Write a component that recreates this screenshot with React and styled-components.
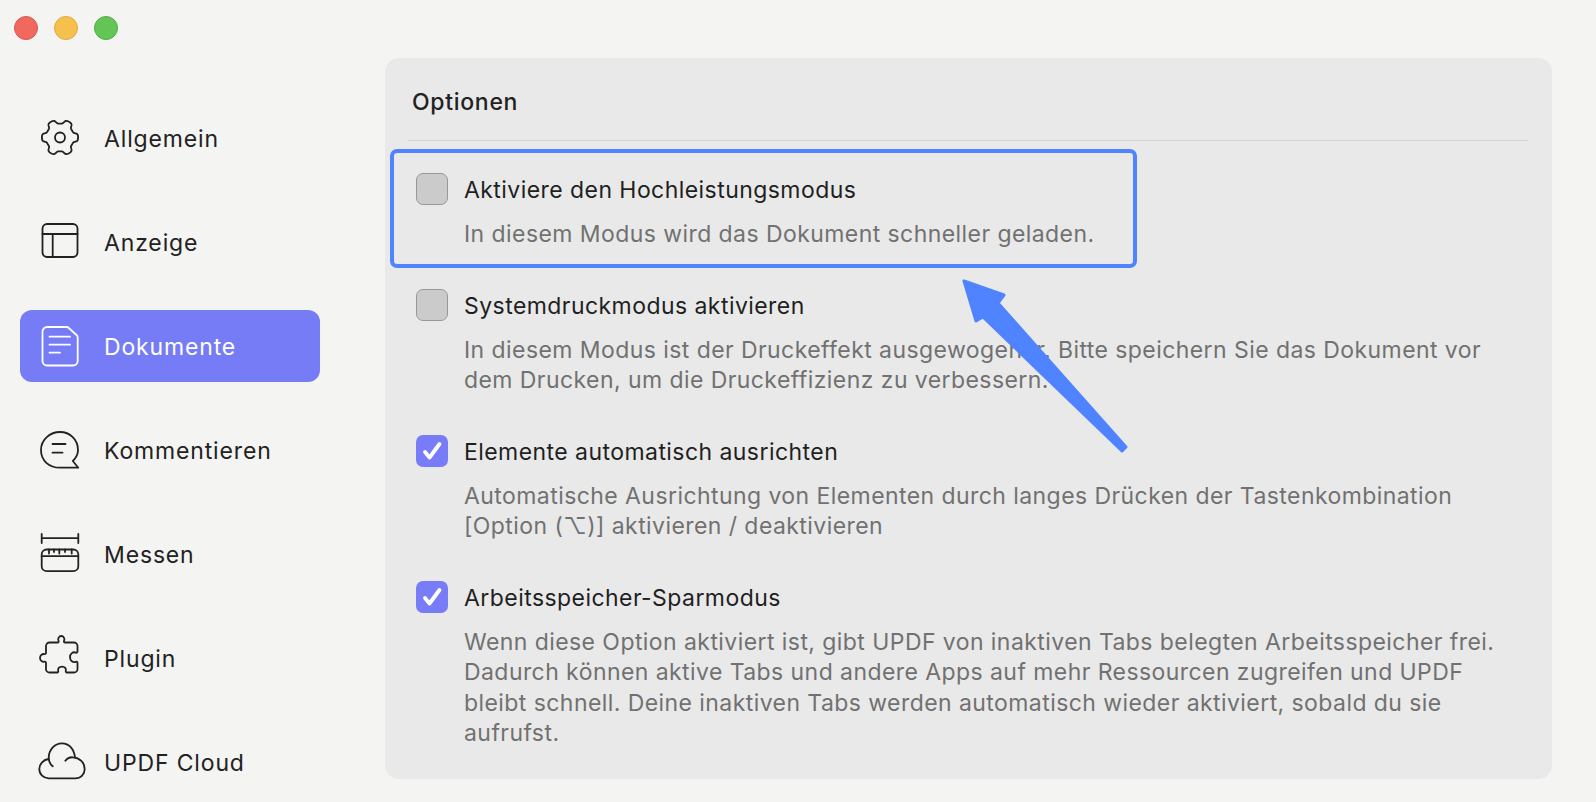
import React from "react";
import styled, { createGlobalStyle } from "styled-components";

const Global = createGlobalStyle`
  html, body { margin: 0; padding: 0; height: 100%; background: #f4f4f3; }
  #root { height: 100%; }
  * { box-sizing: border-box; }
`;

const Windowed = styled.div`
  position: relative;
  width: 1596px;
  height: 802px;
  overflow: hidden;
  display: flex;
  background: #f4f4f3;
  font-family: Inter, "Liberation Sans", sans-serif;
`;
const Sidebar = styled.aside`
  width: 385px;
  flex: none;
  padding: 16px 0 0 14px;
`;
const Lights = styled.div`
  display: flex;
  gap: 16px;
  height: 24px;
`;
const Light = styled.span`
  width: 24px;
  height: 24px;
  border-radius: 50%;
  background: ${(p) => p.$bg};
  border: 1px solid ${(p) => p.$edge};
`;
const Nav = styled.nav`
  display: flex;
  flex-direction: column;
  gap: 32px;
  margin: 62px 0 0 6px;
  width: 300px;
`;
const NavItem = styled.div`
  height: 72px;
  display: flex;
  align-items: center;
  gap: 24px;
  padding-left: 20px;
  border-radius: 12px;
  font-size: 23px;
  letter-spacing: 0.85px;
  color: ${(p) => (p.$active ? "#ffffff" : "#222222")};
  background: ${(p) => (p.$active ? "#767bf6" : "transparent")};
`;
const NavLabel = styled.span`
  padding-top: 2px;
`;
const IconBox = styled.span`
  width: 40px;
  height: 40px;
  flex: none;
  display: block;
  svg { display: block; width: 40px; height: 40px; overflow: visible; fill: none; stroke: currentColor; stroke-width: 1.8; stroke-linecap: round; stroke-linejoin: round; }
`;
const Panel = styled.main`
  width: 1167px;
  height: 721px;
  margin-top: 58px;
  padding: 0 24px 0 23px;
  background: #e9e9e9;
  border-radius: 14px;
`;
const Heading = styled.h2`
  margin: 0;
  height: 83px;
  border-bottom: 1px solid #d4d4d4;
  padding: 29px 0 0 4px;
  font-size: 23px;
  letter-spacing: 0.7px;
  line-height: 30px;
  font-weight: 500;
  color: #222222;
`;
const Options = styled.div`
  display: flex;
  flex-direction: column;
  gap: 39px;
  padding: 32px 0 0 8px;
`;
const Option = styled.div`
  display: grid;
  grid-template-columns: 32px 1fr;
  column-gap: 16px;
  row-gap: 12px;
`;
const Box = styled.span`
  width: 32px;
  height: 32px;
  border-radius: 7px;
  display: flex;
  align-items: center;
  justify-content: center;
  background: ${(p) => (p.$on ? "#787cf8" : "#cbcbcb")};
  border: ${(p) => (p.$on ? "none" : "1.5px solid #989898")};
`;
const Title = styled.div`
  font-size: 23px;
  letter-spacing: 0.44px;
  line-height: 34px;
  color: #1f1f1f;
`;
const Desc = styled.div`
  grid-column: 2;
  font-size: 23px;
  letter-spacing: 0.43px;
  line-height: 30.5px;
  color: #717171;
`;
const Highlight = styled.div`
  position: absolute;
  left: 390px;
  top: 149px;
  width: 747px;
  height: 119px;
  border: 4px solid #4f83ff;
  border-radius: 7px;
`;
const Arrow = styled.svg`
  position: absolute;
  left: 950px;
  top: 270px;
  width: 190px;
  height: 190px;
  overflow: visible;
`;

const gearPath = (() => {
  const pts = [];
  const k = Math.tanh(2.2);
  for (let i = 0; i < 180; i += 1) {
    const t = (i / 180) * 2 * Math.PI;
    const r = 16 + (2.1 * Math.tanh(2.2 * Math.cos(6 * t))) / k;
    pts.push(`${(20 + r * Math.cos(t)).toFixed(2)} ${(19.5 + r * Math.sin(t)).toFixed(2)}`);
  }
  return `M${pts.join("L")}Z`;
})();

const Gear = () => (
  <svg viewBox="0 0 40 40">
    <circle cx="20" cy="19.5" r="5" />
    <path d={gearPath} />
  </svg>
);
const Layout = () => (
  <svg viewBox="0 0 40 40">
    <rect x="2.5" y="2" width="35" height="33" rx="4.5" />
    <path d="M2.5 12h35M12.7 12v23" />
  </svg>
);
const Doc = () => (
  <svg viewBox="0 0 40 40">
    <path d="M7 1h19.5c1 0 1.600.3 2.300 1l7.700 7c.8.7 1.200 1.500 1.200 2.500V35a4.500 4.500 0 0 1-4.500 4.500H7A4.500 4.500 0 0 1 2.500 35V5.500A4.500 4.500 0 0 1 7 1z" />
    <path d="M9.500 10.700H30M9.500 18.700H30M9.500 26.700H20" />
  </svg>
);
const Comment = () => (
  <svg viewBox="0 0 40 40">
    <path d="M20 2C10 2 1 9.500 1 20s8 17.700 19 17.700h18.300l-5.500-6.700C36 28 38 24 38 20 38 9.500 30 2 20 2z" />
    <path d="M12.500 14h13M12.500 22.700h10" />
  </svg>
);
const Ruler = () => (
  <svg viewBox="0 0 40 40">
    <path d="M1.700 0v9M38.300 0v9M1.700 4.200h36.600" />
    <rect x="1.700" y="15.500" width="36.600" height="21.700" rx="5" />
    <path d="M1.700 22.200h36.600M9 15.500v4M14 15.500v2.500M19.300 15.500v4M25 15.500v2.500M31.700 15.500v4" />
  </svg>
);
const Puzzle = () => (
  <svg viewBox="0 0 40 40">
    <path d="M9.500 4.500H17.500c1 0 1.500-.8 1-1.800-1-2 .5-4.700 2.800-4.700s3.800 2.700 2.800 4.700c-.5 1 0 1.800 1 1.800H34a3.500 3.500 0 0 1 3.500 3.500v5.500c0 1-.8 1.500-1.800 1.100C33 13.500 30 15.500 30 19.200s3 5.700 5.700 4.600c1-.4 1.800.1 1.800 1.100V31a3.500 3.500 0 0 1-3.500 3.500H27c-1 0-1.500-.8-1.200-1.800.6-2-.8-4-3.800-4s-4.400 2-3.800 4c.3 1-.2 1.800-1.200 1.800H9.500A3.500 3.500 0 0 1 6 31v-6c0-1-.6-1.500-1.500-1.300-2 .5-4.500-1-4.500-3.800s2.500-4.300 4.500-3.800c.9.2 1.500-.3 1.500-1.300V8a3.500 3.500 0 0 1 3.500-3.500z" />
  </svg>
);
const Cloud = () => (
  <svg viewBox="0 0 40 40">
    <path d="M12.700 24.300C10 22 8.700 19.500 8.700 16 8.700 8 14.500 1.300 22 1.300c7 0 12 5.700 13 14.200" />
    <path d="M25.300 18.700C27 16.500 30 15 33 15.300c6.500.2 11.700 5.200 11.700 11.700 0 5-3.700 9.300-9.400 9.300H8.700C3.500 36.300-.7 32.500-.7 27c0-5 4.200-9.500 9.400-10" />
  </svg>
);
const Check = () => (
  <svg width="32" height="32" viewBox="0 0 32 32" fill="none" stroke="#fff" strokeWidth="3.8" strokeLinecap="round" strokeLinejoin="round">
    <path d="M9 17l4.500 5.500L23.500 9" />
  </svg>
);

const navItems = [
  ["Allgemein", Gear],
  ["Anzeige", Layout],
  ["Dokumente", Doc, true],
  ["Kommentieren", Comment],
  ["Messen", Ruler],
  ["Plugin", Puzzle],
  ["UPDF Cloud", Cloud],
];
const options = [
  ["Aktiviere den Hochleistungsmodus", ["In diesem Modus wird das Dokument schneller geladen."], false],
  ["Systemdruckmodus aktivieren", ["In diesem Modus ist der Druckeffekt ausgewogener. Bitte speichern Sie das Dokument vor", "dem Drucken, um die Druckeffizienz zu verbessern."], false],
  ["Elemente automatisch ausrichten", ["Automatische Ausrichtung von Elementen durch langes Drücken der Tastenkombination", "[Option (⌥)] aktivieren / deaktivieren"], true],
  ["Arbeitsspeicher-Sparmodus", ["Wenn diese Option aktiviert ist, gibt UPDF von inaktiven Tabs belegten Arbeitsspeicher frei.", "Dadurch können aktive Tabs und andere Apps auf mehr Ressourcen zugreifen und UPDF", "bleibt schnell. Deine inaktiven Tabs werden automatisch wieder aktiviert, sobald du sie", "aufrufst."], true],
];

export default function App() {
  return (
    <Windowed>
      <Global />
      <Sidebar>
        <Lights>
          <Light $bg="#f0685e" $edge="#d9574e" />
          <Light $bg="#f6c04f" $edge="#dfa93f" />
          <Light $bg="#62c554" $edge="#52ad46" />
        </Lights>
        <Nav>
          {navItems.map(([label, Icon, active]) => (
            <NavItem key={label} $active={active}>
              <IconBox><Icon /></IconBox>
              <NavLabel>{label}</NavLabel>
            </NavItem>
          ))}
        </Nav>
      </Sidebar>
      <Panel>
        <Heading>Optionen</Heading>
        <Options>
          {options.map(([title, lines, on]) => (
            <Option key={title}>
              <Box $on={on}>{on && <Check />}</Box>
              <Title>{title}</Title>
              <Desc>{lines.map((l) => <div key={l}>{l}</div>)}</Desc>
            </Option>
          ))}
        </Options>
      </Panel>
      <Highlight />
      <Arrow viewBox="950 270 190 190">
        <path fill="#4f83ff" stroke="#4f83ff" strokeWidth="3" strokeLinejoin="round" d="M964 281L1004 295L998 303L1126 447L1122 451L983 317L976 321Z" />
      </Arrow>
    </Windowed>
  );
}
